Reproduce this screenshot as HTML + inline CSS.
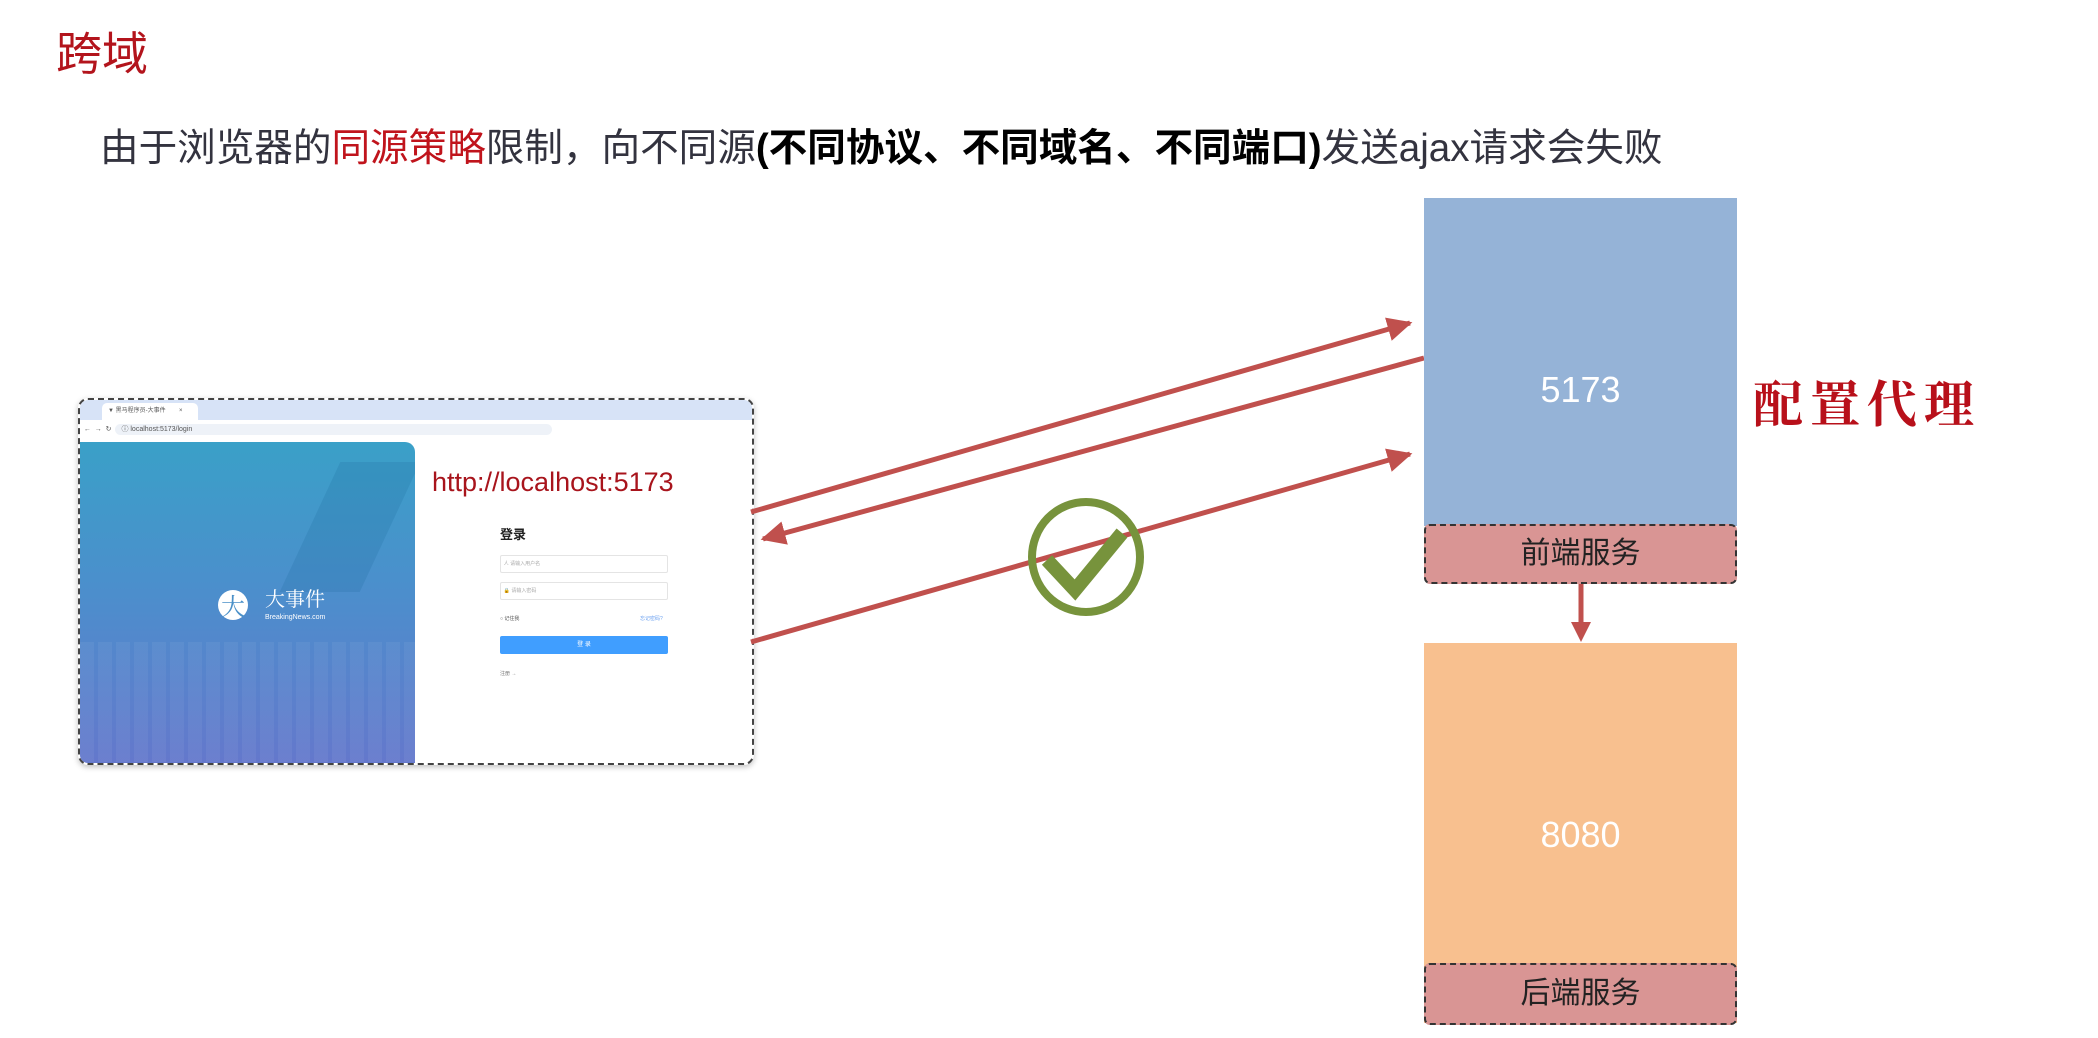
<!DOCTYPE html>
<html><head><meta charset="utf-8"><style>
html,body{margin:0;padding:0;background:#fff;}
body{width:2098px;height:1038px;position:relative;overflow:hidden;font-family:"Liberation Sans","Noto Sans CJK SC",sans-serif;}
.a{position:absolute;white-space:nowrap;}
</style></head><body>
<div class="a" style="left:56px;top:26px;font-size:46px;color:#b3141c;line-height:56px;">跨域</div>
<div class="a" style="left:100px;top:125px;font-size:38.6px;color:#33333f;line-height:48px;">由于浏览器的<span style="color:#c0141c">同源策略</span>限制，向不同源<b style="color:#000">(不同协议、不同域名、不同端口)</b>发送ajax请求会失败</div>

<!-- browser -->
<div class="a" style="left:78px;top:398px;width:672px;height:363px;border:2px dashed #444;border-radius:10px;overflow:hidden;box-shadow:0 2px 6px rgba(0,0,0,.25);background:#fff;">
  <div style="position:absolute;left:0;top:0;right:0;height:20px;background:#d7e3f7;"></div>
  <div style="position:absolute;left:22px;top:3px;width:90px;height:17px;background:#fff;border-radius:5px 5px 0 0;font-size:6px;color:#555;line-height:17px;padding-left:6px;">▼ 黑马程序员-大事件 &nbsp;&nbsp;&nbsp;&nbsp;&nbsp;&nbsp;&nbsp;×</div>
  <div style="position:absolute;left:0;top:20px;right:0;height:20px;background:#fff;font-size:7px;color:#555;line-height:20px;">&nbsp;&nbsp;←&nbsp;&nbsp;→&nbsp;&nbsp;↻&nbsp;&nbsp;<span style="background:#eef2f8;border-radius:8px;padding:2px 360px 2px 6px;">ⓘ localhost:5173/login</span></div>
  <div style="position:absolute;left:0;top:42px;width:335px;height:321px;border-radius:0 10px 0 0;overflow:hidden;background:linear-gradient(180deg,#3aa0c8 0%,#4b8fcc 45%,#6478cc 100%);">
    <div style="position:absolute;left:230px;top:20px;width:80px;height:130px;background:rgba(20,100,150,.18);transform:skewX(-25deg);"></div>
    <div style="position:absolute;left:0;top:200px;width:335px;height:120px;background:repeating-linear-gradient(90deg,rgba(255,255,255,.05) 0 14px,transparent 14px 18px);"></div>
    <div style="position:absolute;left:138px;top:148px;width:30px;height:30px;border-radius:50%;background:#fff;color:#4a90c8;font-size:24px;line-height:30px;text-align:center;font-family:'Noto Serif CJK SC',serif;">大</div>
    <div style="position:absolute;left:185px;top:144px;color:#fff;font-size:20px;font-family:'Noto Serif CJK SC',serif;line-height:24px;">大事件</div>
    <div style="position:absolute;left:185px;top:172px;color:#fff;font-size:7px;">BreakingNews.com</div>
  </div>
  <div style="position:absolute;left:352px;top:66px;font-size:27px;color:#a8141c;line-height:32px;">http://localhost:5173</div>
  <div style="position:absolute;left:420px;top:124px;font-size:13px;font-weight:bold;color:#222;">登录</div>
  <div style="position:absolute;left:420px;top:155px;width:166px;height:16px;border:1px solid #e4e4e4;border-radius:2px;font-size:5px;color:#aaa;line-height:16px;">&nbsp;&nbsp;人 请输入用户名</div>
  <div style="position:absolute;left:420px;top:182px;width:166px;height:16px;border:1px solid #e4e4e4;border-radius:2px;font-size:5px;color:#aaa;line-height:16px;">&nbsp;&nbsp;🔒 请输入密码</div>
  <div style="position:absolute;left:420px;top:215px;font-size:5px;color:#555;">○ 记住我</div>
  <div style="position:absolute;left:560px;top:215px;font-size:5px;color:#6aa0f0;">忘记密码?</div>
  <div style="position:absolute;left:420px;top:236px;width:168px;height:18px;background:#409eff;border-radius:2px;color:#fff;font-size:6px;line-height:18px;text-align:center;">登 录</div>
  <div style="position:absolute;left:420px;top:270px;font-size:5px;color:#777;">注册 →</div>
</div>

<svg class="a" style="left:0;top:0" width="2098" height="1038">
  <defs><marker id="m" markerWidth="6" markerHeight="6" refX="4.5" refY="3" orient="auto" markerUnits="strokeWidth"><path d="M0,0.6 L5,3 L0,5.4 z" fill="#c0504d"/></marker></defs>
  <g stroke="#c0504d" stroke-width="5" fill="none" marker-end="url(#m)">
    <line x1="751" y1="512" x2="1410" y2="323"/>
    <line x1="1424" y1="358" x2="763" y2="539"/>
    <line x1="751" y1="642" x2="1410" y2="454"/>
  </g>
  <ellipse cx="1086" cy="557" rx="54" ry="55" fill="none" stroke="#77933c" stroke-width="8"/>
  <path d="M1047,560 L1075,590 L1122,533" fill="none" stroke="#77933c" stroke-width="14"/>
  <line x1="1581" y1="582" x2="1581" y2="625" stroke="#c0504d" stroke-width="5"/>
  <path d="M1571,622 L1591,622 L1581,642 z" fill="#c0504d"/>
</svg>

<div class="a" style="left:1424px;top:198px;width:313px;height:328px;background:#95b3d7;"></div>
<div class="a" style="left:1424px;top:368px;width:313px;text-align:center;color:#fff;font-size:36px;line-height:44px;">5173</div>
<div class="a" style="left:1424px;top:524px;width:309px;height:56px;background:#d99594;border:2px dashed #333;border-radius:6px;text-align:center;font-size:30px;line-height:56px;color:#222;">前端服务</div>
<div class="a" style="left:1424px;top:643px;width:313px;height:380px;background:#f8c08f;"></div>
<div class="a" style="left:1424px;top:813px;width:313px;text-align:center;color:#fff;font-size:36px;line-height:44px;">8080</div>
<div class="a" style="left:1424px;top:963px;width:309px;height:58px;background:#d99594;border:2px dashed #333;border-radius:6px;text-align:center;font-size:30px;line-height:58px;color:#222;">后端服务</div>

<div class="a" style="left:1753px;top:374px;font-size:50px;letter-spacing:7px;font-weight:bold;color:#b8101a;font-family:'Noto Serif CJK SC',serif;line-height:54px;">配置代理</div>
</body></html>
